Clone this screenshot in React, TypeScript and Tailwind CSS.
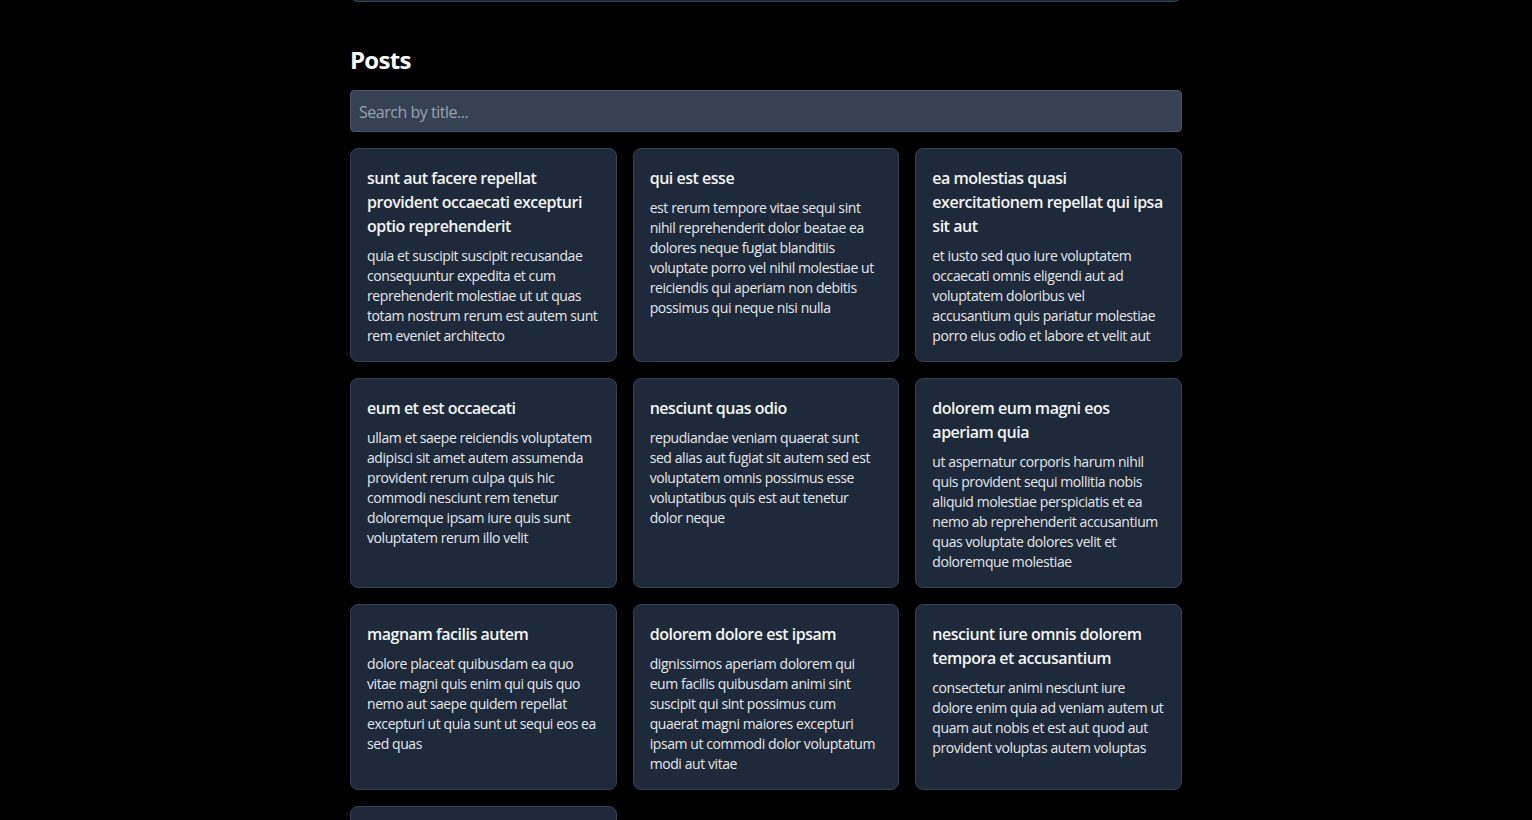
import React from "react";

const posts = [
  {
    title: "sunt aut facere repellat provident occaecati excepturi optio reprehenderit",
    body: "quia et suscipit suscipit recusandae consequuntur expedita et cum reprehenderit molestiae ut ut quas totam nostrum rerum est autem sunt rem eveniet architecto",
  },
  {
    title: "qui est esse",
    body: "est rerum tempore vitae sequi sint nihil reprehenderit dolor beatae ea dolores neque fugiat blanditiis voluptate porro vel nihil molestiae ut reiciendis qui aperiam non debitis possimus qui neque nisi nulla",
  },
  {
    title: "ea molestias quasi exercitationem repellat qui ipsa sit aut",
    body: "et iusto sed quo iure voluptatem occaecati omnis eligendi aut ad voluptatem doloribus vel accusantium quis pariatur molestiae porro eius odio et labore et velit aut",
  },
  {
    title: "eum et est occaecati",
    body: "ullam et saepe reiciendis voluptatem adipisci sit amet autem assumenda provident rerum culpa quis hic commodi nesciunt rem tenetur doloremque ipsam iure quis sunt voluptatem rerum illo velit",
  },
  {
    title: "nesciunt quas odio",
    body: "repudiandae veniam quaerat sunt sed alias aut fugiat sit autem sed est voluptatem omnis possimus esse voluptatibus quis est aut tenetur dolor neque",
  },
  {
    title: "dolorem eum magni eos aperiam quia",
    body: "ut aspernatur corporis harum nihil quis provident sequi mollitia nobis aliquid molestiae perspiciatis et ea nemo ab reprehenderit accusantium quas voluptate dolores velit et doloremque molestiae",
  },
  {
    title: "magnam facilis autem",
    body: "dolore placeat quibusdam ea quo vitae magni quis enim qui quis quo nemo aut saepe quidem repellat excepturi ut quia sunt ut sequi eos ea sed quas",
  },
  {
    title: "dolorem dolore est ipsam",
    body: "dignissimos aperiam dolorem qui eum facilis quibusdam animi sint suscipit qui sint possimus cum quaerat magni maiores excepturi ipsam ut commodi dolor voluptatum modi aut vitae",
  },
  {
    title: "nesciunt iure omnis dolorem tempora et accusantium",
    body: "consectetur animi nesciunt iure dolore enim quia ad veniam autem ut quam aut nobis et est aut quod aut provident voluptas autem voluptas",
  },
  {
    title: "optio molestias id quia eum",
    body: "quo et expedita modi cum officia vel magni doloribus qui repudiandae vero nisi sit quos veniam quod sed accusamus veritatis error",
  },
];

export default function App() {
  return (
    <div
      className="min-h-screen bg-black text-gray-100"
      style={{ fontFamily: '"Open Sans", "Noto Sans", sans-serif' }}
    >
      <div className="mx-auto max-w-4xl px-8">
        <div className="-mt-[38px] h-[40px] rounded-lg border border-gray-700 bg-gray-800" />
        <h2 className="mt-[42px] mb-[14px] text-2xl font-bold tracking-[-0.03em] text-white">Posts</h2>
        <input
          type="text"
          placeholder="Search by title..."
          className="mb-4 w-full rounded border border-gray-600 bg-gray-700 px-2 pt-[9px] pb-[7px] text-base tracking-[-0.03em] text-gray-100 placeholder-gray-400 outline-none"
        />
        <div className="grid grid-cols-3 gap-4 pb-8">
          {posts.map((p, i) => (
            <div key={i} className="rounded-lg border border-gray-700 bg-gray-800 px-4 pt-[17px] pb-[15px]">
              <h3 className="mb-2 text-base font-semibold leading-6 tracking-[-0.03em] text-gray-100">{p.title}</h3>
              <p className="text-sm leading-5 tracking-[-0.03em] text-gray-200">{p.body}</p>
            </div>
          ))}
        </div>
      </div>
    </div>
  );
}
